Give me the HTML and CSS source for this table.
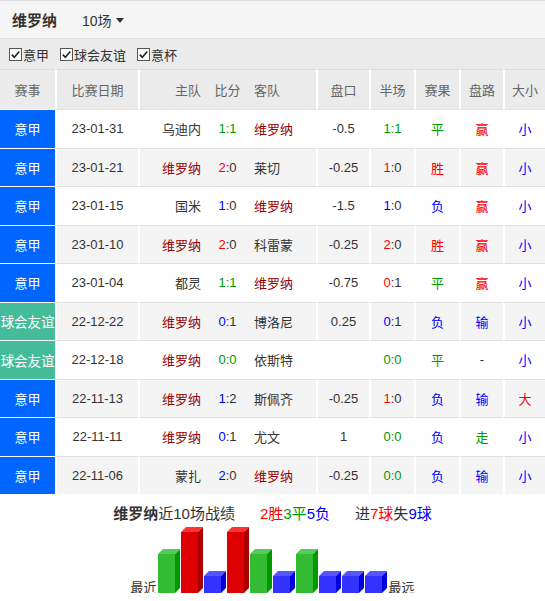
FILE: index.html
```html
<!DOCTYPE html>
<html lang="zh-CN">
<head>
<meta charset="utf-8">
<title>维罗纳 近10场</title>
<link rel="stylesheet" href="styles.css">
</head>
<body>
<div class="topbar">
  <span class="team-title">维罗纳</span>
  <span class="select">10场<i class="caret"></i></span>
</div>
<div class="filters">
  <label class="chk"><svg class="box" width="13" height="13" viewBox="0 0 13 13"><rect x="0.5" y="0.5" width="12" height="12" fill="#fff" stroke="#555"/><polyline points="2.8,6.6 5.3,9.2 10.3,3.4" fill="none" stroke="#222" stroke-width="1.6"/></svg>意甲</label>
  <label class="chk"><svg class="box" width="13" height="13" viewBox="0 0 13 13"><rect x="0.5" y="0.5" width="12" height="12" fill="#fff" stroke="#555"/><polyline points="2.8,6.6 5.3,9.2 10.3,3.4" fill="none" stroke="#222" stroke-width="1.6"/></svg>球会友谊</label>
  <label class="chk"><svg class="box" width="13" height="13" viewBox="0 0 13 13"><rect x="0.5" y="0.5" width="12" height="12" fill="#fff" stroke="#555"/><polyline points="2.8,6.6 5.3,9.2 10.3,3.4" fill="none" stroke="#222" stroke-width="1.6"/></svg>意杯</label>
</div>
<div class="table">
  <div class="row head">
    <div class="c ev">赛事</div>
    <div class="c sep">比赛日期</div>
    <div class="c sep home">主队</div>
    <div class="c score">比分</div>
    <div class="c away">客队</div>
    <div class="c sep">盘口</div>
    <div class="c sep">半场</div>
    <div class="c sep">赛果</div>
    <div class="c sep">盘路</div>
    <div class="c sep">大小</div>
  </div>

  <div class="row">
    <div class="c ev serie">意甲</div>
    <div class="c sep">23-01-31</div>
    <div class="c sep home">乌迪内</div>
    <div class="c score"><span class="g">1:1</span></div>
    <div class="c away"><span class="tm">维罗纳</span></div>
    <div class="c sep">-0.5</div>
    <div class="c sep"><span class="g">1:1</span></div>
    <div class="c sep g">平</div>
    <div class="c sep r">赢</div>
    <div class="c sep b">小</div>
  </div>
  <div class="row alt">
    <div class="c ev serie">意甲</div>
    <div class="c sep">23-01-21</div>
    <div class="c sep home"><span class="tm">维罗纳</span></div>
    <div class="c score"><span class="r">2</span>:0</div>
    <div class="c away">莱切</div>
    <div class="c sep">-0.25</div>
    <div class="c sep"><span class="r">1</span>:0</div>
    <div class="c sep r">胜</div>
    <div class="c sep r">赢</div>
    <div class="c sep b">小</div>
  </div>
  <div class="row">
    <div class="c ev serie">意甲</div>
    <div class="c sep">23-01-15</div>
    <div class="c sep home">国米</div>
    <div class="c score"><span class="b">1</span>:0</div>
    <div class="c away"><span class="tm">维罗纳</span></div>
    <div class="c sep">-1.5</div>
    <div class="c sep"><span class="b">1</span>:0</div>
    <div class="c sep b">负</div>
    <div class="c sep r">赢</div>
    <div class="c sep b">小</div>
  </div>
  <div class="row alt">
    <div class="c ev serie">意甲</div>
    <div class="c sep">23-01-10</div>
    <div class="c sep home"><span class="tm">维罗纳</span></div>
    <div class="c score"><span class="r">2</span>:0</div>
    <div class="c away">科雷蒙</div>
    <div class="c sep">-0.25</div>
    <div class="c sep"><span class="r">2</span>:0</div>
    <div class="c sep r">胜</div>
    <div class="c sep r">赢</div>
    <div class="c sep b">小</div>
  </div>
  <div class="row">
    <div class="c ev serie">意甲</div>
    <div class="c sep">23-01-04</div>
    <div class="c sep home">都灵</div>
    <div class="c score"><span class="g">1:1</span></div>
    <div class="c away"><span class="tm">维罗纳</span></div>
    <div class="c sep">-0.75</div>
    <div class="c sep"><span class="r">0</span>:1</div>
    <div class="c sep g">平</div>
    <div class="c sep r">赢</div>
    <div class="c sep b">小</div>
  </div>
  <div class="row alt">
    <div class="c ev club">球会友谊</div>
    <div class="c sep">22-12-22</div>
    <div class="c sep home"><span class="tm">维罗纳</span></div>
    <div class="c score"><span class="b">0</span>:1</div>
    <div class="c away">博洛尼</div>
    <div class="c sep">0.25</div>
    <div class="c sep"><span class="b">0</span>:1</div>
    <div class="c sep b">负</div>
    <div class="c sep b">输</div>
    <div class="c sep b">小</div>
  </div>
  <div class="row">
    <div class="c ev club">球会友谊</div>
    <div class="c sep">22-12-18</div>
    <div class="c sep home"><span class="tm">维罗纳</span></div>
    <div class="c score"><span class="g">0:0</span></div>
    <div class="c away">依斯特</div>
    <div class="c sep"></div>
    <div class="c sep"><span class="g">0:0</span></div>
    <div class="c sep g">平</div>
    <div class="c sep">-</div>
    <div class="c sep b">小</div>
  </div>
  <div class="row alt">
    <div class="c ev serie">意甲</div>
    <div class="c sep">22-11-13</div>
    <div class="c sep home"><span class="tm">维罗纳</span></div>
    <div class="c score"><span class="b">1</span>:2</div>
    <div class="c away">斯佩齐</div>
    <div class="c sep">-0.25</div>
    <div class="c sep"><span class="r">1</span>:0</div>
    <div class="c sep b">负</div>
    <div class="c sep b">输</div>
    <div class="c sep r">大</div>
  </div>
  <div class="row">
    <div class="c ev serie">意甲</div>
    <div class="c sep">22-11-11</div>
    <div class="c sep home"><span class="tm">维罗纳</span></div>
    <div class="c score"><span class="b">0</span>:1</div>
    <div class="c away">尤文</div>
    <div class="c sep">1</div>
    <div class="c sep"><span class="g">0:0</span></div>
    <div class="c sep b">负</div>
    <div class="c sep g">走</div>
    <div class="c sep b">小</div>
  </div>
  <div class="row alt">
    <div class="c ev serie">意甲</div>
    <div class="c sep">22-11-06</div>
    <div class="c sep home">蒙扎</div>
    <div class="c score"><span class="b">2</span>:0</div>
    <div class="c away"><span class="tm">维罗纳</span></div>
    <div class="c sep">-0.25</div>
    <div class="c sep"><span class="g">0:0</span></div>
    <div class="c sep b">负</div>
    <div class="c sep b">输</div>
    <div class="c sep b">小</div>
  </div>
</div>

<div class="summary">
  <span><b>维罗纳</b>近10场战绩</span>
  <span><span class="r">2胜</span><span class="g">3平</span><span class="b">5负</span></span>
  <span>进<span class="r">7球</span>失<span class="b">9球</span></span>
</div>

<div class="chart">
  <span class="lbl">最近</span>
  <svg class="bar" width="22" height="44" viewBox="0 0 22 44"><rect x="0" y="5" width="17" height="39" fill="#33bb33"/><polygon points="0,5 5,0 22,0 17,5" fill="#55cc55"/><polygon points="17,5 22,0 22,39 17,44" fill="#009900"/></svg>
  <svg class="bar" width="22" height="66" viewBox="0 0 22 66"><rect x="0" y="5" width="17" height="61" fill="#dd0000"/><polygon points="0,5 5,0 22,0 17,5" fill="#ff3333"/><polygon points="17,5 22,0 22,61 17,66" fill="#aa0000"/></svg>
  <svg class="bar" width="22" height="22" viewBox="0 0 22 22"><rect x="0" y="5" width="17" height="17" fill="#3333ff"/><polygon points="0,5 5,0 22,0 17,5" fill="#5555ff"/><polygon points="17,5 22,0 22,17 17,22" fill="#0000dd"/></svg>
  <svg class="bar" width="22" height="66" viewBox="0 0 22 66"><rect x="0" y="5" width="17" height="61" fill="#dd0000"/><polygon points="0,5 5,0 22,0 17,5" fill="#ff3333"/><polygon points="17,5 22,0 22,61 17,66" fill="#aa0000"/></svg>
  <svg class="bar" width="22" height="44" viewBox="0 0 22 44"><rect x="0" y="5" width="17" height="39" fill="#33bb33"/><polygon points="0,5 5,0 22,0 17,5" fill="#55cc55"/><polygon points="17,5 22,0 22,39 17,44" fill="#009900"/></svg>
  <svg class="bar" width="22" height="22" viewBox="0 0 22 22"><rect x="0" y="5" width="17" height="17" fill="#3333ff"/><polygon points="0,5 5,0 22,0 17,5" fill="#5555ff"/><polygon points="17,5 22,0 22,17 17,22" fill="#0000dd"/></svg>
  <svg class="bar" width="22" height="44" viewBox="0 0 22 44"><rect x="0" y="5" width="17" height="39" fill="#33bb33"/><polygon points="0,5 5,0 22,0 17,5" fill="#55cc55"/><polygon points="17,5 22,0 22,39 17,44" fill="#009900"/></svg>
  <svg class="bar" width="22" height="22" viewBox="0 0 22 22"><rect x="0" y="5" width="17" height="17" fill="#3333ff"/><polygon points="0,5 5,0 22,0 17,5" fill="#5555ff"/><polygon points="17,5 22,0 22,17 17,22" fill="#0000dd"/></svg>
  <svg class="bar" width="22" height="22" viewBox="0 0 22 22"><rect x="0" y="5" width="17" height="17" fill="#3333ff"/><polygon points="0,5 5,0 22,0 17,5" fill="#5555ff"/><polygon points="17,5 22,0 22,17 17,22" fill="#0000dd"/></svg>
  <svg class="bar" width="22" height="22" viewBox="0 0 22 22"><rect x="0" y="5" width="17" height="17" fill="#3333ff"/><polygon points="0,5 5,0 22,0 17,5" fill="#5555ff"/><polygon points="17,5 22,0 22,17 17,22" fill="#0000dd"/></svg>
  <span class="lbl far">最远</span>
</div>
</body>
</html>
```

FILE: styles.css
```css
* { box-sizing: border-box; }
html, body { margin: 0; padding: 0; background: #fff; }
body {
  width: 545px;
  font-family: "Liberation Sans", "Noto Sans CJK SC", sans-serif;
  font-size: 13px;
  color: #333;
}

.topbar {
  height: 39px;
  border-top: 1px solid #dcdcdc;
  border-bottom: 1px solid #e2e2e2;
  background: #f5f5f5;
  display: flex;
  align-items: center;
  padding-left: 12px;
}
.team-title {
  font-size: 15px;
  font-weight: bold;
  color: #333;
  width: 70px;
}
.select {
  font-size: 14px;
  color: #333;
  display: flex;
  align-items: center;
}
.caret {
  display: inline-block;
  margin-left: 4px;
  border-left: 4px solid transparent;
  border-right: 4px solid transparent;
  border-top: 5px solid #333;
  margin-top: 1px;
}

.filters {
  height: 30px;
  background: #ebebeb;
  display: flex;
  align-items: center;
  padding-left: 9px;
  gap: 11px;
}
.chk {
  display: flex;
  align-items: center;
  font-size: 13px;
  color: #333;
}
.box { display: block; margin-right: 1px; }

.row {
  display: grid;
  grid-template-columns: 55px 83px 63px 53px 62px 53px 45px 45px 44px 42px;
  height: 38.5px;
  background: #fff;
}
.row.alt { background: #f4f4f4; }
.row.head { height: 40px; background: #ebebeb; }
.row.head .c { color: #666; border-top-color: #dcdcdc; }

.c {
  display: flex;
  align-items: center;
  justify-content: center;
  border-top: 1px solid #e0e0e0;
  white-space: nowrap;
  overflow: hidden;
}
.sep { border-left: 2px solid #fff; }
.c.home { justify-content: flex-end; }
.c.score { justify-content: center; }
.c.away { justify-content: flex-start; }

.ev { color: #fff; border-top-color: #fff; }
.ev.serie { background: #0066ff; }
.ev.club { background: #44bb99; font-size: 13.5px; letter-spacing: -0.1px; }

.tm { color: #990000; }
.r { color: #ff0000; }
.g { color: #009900; }
.b { color: #0000ff; }

.summary {
  display: flex;
  justify-content: center;
  gap: 25px;
  padding-top: 10px;
  line-height: 20px;
  font-size: 15px;
  color: #333;
}
.summary b { font-weight: bold; }

.chart {
  display: flex;
  justify-content: center;
  align-items: flex-end;
  gap: 1px;
  margin-top: 3px;
  height: 66px;
}
.bar { display: block; }
.lbl {
  font-size: 13px;
  line-height: 16px;
  margin-bottom: -3px;
  color: #333;
}
.lbl.far { margin-left: 1px; }
```
